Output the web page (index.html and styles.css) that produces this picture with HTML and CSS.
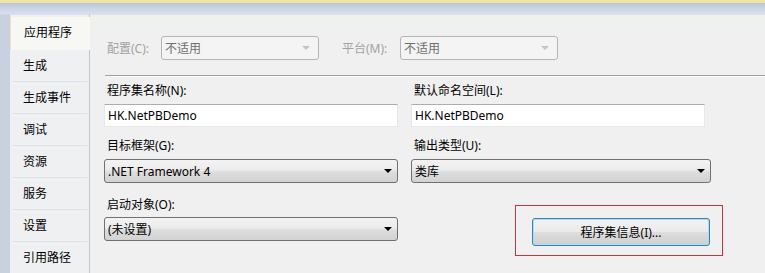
FILE: index.html
```html
<!DOCTYPE html>
<html lang="zh-CN">
<head>
<meta charset="utf-8">
<title>项目属性</title>
<link rel="stylesheet" href="styles.css">
</head>
<body>
<div class="topline"></div>
<div class="shell">
  <nav class="tabs">
    <div class="tab active">应用程序</div>
    <div class="tab">生成</div>
    <div class="tab">生成事件</div>
    <div class="tab">调试</div>
    <div class="tab">资源</div>
    <div class="tab">服务</div>
    <div class="tab">设置</div>
    <div class="tab">引用路径</div>
  </nav>
  <main class="main">
    <div class="cfg-row">
      <span class="cfg-label">配置(C):</span>
      <div class="combo disabled"><span class="val">不适用</span><span class="arrow"></span></div>
      <span class="cfg-label plat">平台(M):</span>
      <div class="combo disabled"><span class="val">不适用</span><span class="arrow"></span></div>
    </div>
    <div class="sep"></div>
    <div class="grid">
      <div class="field r1">
        <label class="lbl">程序集名称(N):</label>
        <div class="textbox">HK.NetPBDemo</div>
      </div>
      <div class="field r1">
        <label class="lbl">默认命名空间(L):</label>
        <div class="textbox">HK.NetPBDemo</div>
      </div>
      <div class="field r2">
        <label class="lbl">目标框架(G):</label>
        <div class="combo"><span class="val">.NET Framework 4</span><span class="arrow"></span></div>
      </div>
      <div class="field r2">
        <label class="lbl">输出类型(U):</label>
        <div class="combo wide"><span class="val">类库</span><span class="arrow"></span></div>
      </div>
      <div class="field r3">
        <label class="lbl">启动对象(O):</label>
        <div class="combo"><span class="val">(未设置)</span><span class="arrow"></span></div>
      </div>
      <div class="field r3">
        <div class="highlight">
          <button class="btn" type="button">程序集信息(I)...</button>
        </div>
      </div>
    </div>
    <div class="group-title">资源</div>
  </main>
</div>
</body>
</html>
```
FILE: styles.css
```css
html, body {
  margin: 0;
  padding: 0;
}
body {
  width: 765px;
  height: 273px;
  overflow: hidden;
  background: #c8d1df;
  font-family: "Noto Sans", "Noto Sans CJK SC", sans-serif;
  font-size: 12px;
  color: #000;
}
.topline {
  height: 3px;
  background: #f3e3a3;
}
.shell {
  display: flex;
  padding-top: 11px;
  padding-left: 10px;
  height: 259px;
  overflow: hidden;
  background: linear-gradient(#b9c5d9 0, #cdd6e4 6px, #d9def0 11px, #c8d1df 12px);
}
.tabs {
  width: 79px;
  flex: none;
  background: #eef0f2;
  border-right: 1px solid #c2c7cf;
  border-top: 1px solid #dde1ea;
  padding-top: 2px;
}
.tab {
  height: 31px;
  line-height: 31px;
  border-bottom: 1px solid #dfe2e6;
  margin: 0 2px 0 2px;
  padding-left: 11px;
  white-space: nowrap;
}
.tab.active {
  margin: 0 -1px 0 0;
  padding-left: 13px;
  background: #f7f7f4;
  border-left: 1px solid #efe2b8;
  border-bottom: none;
  height: 33px;
  line-height: 32px;
  position: relative;
  z-index: 1;
}
.main {
  flex: 1;
  background: linear-gradient(#eef2ea 0, #f0f0f0 14px);
  border-top: 1px solid #dde1ea;
  padding: 21px 0 0 14px;
  min-width: 0;
  overflow: hidden;
}
.cfg-row {
  display: flex;
  align-items: center;
  height: 24px;
}
.cfg-label {
  width: 54px;
  padding-left: 3px;
  color: #a2a2a2;
  white-space: nowrap;
}
.cfg-label.plat {
  width: 58px;
  margin-left: 20px;
}
.combo {
  box-sizing: border-box;
  width: 294px;
  height: 24px;
  display: flex;
  align-items: center;
  justify-content: space-between;
  padding: 0 5px 0 3px;
  border: 1px solid #707070;
  border-radius: 3px;
  background: linear-gradient(#f3f3f3 0%, #ebebeb 45%, #dddddd 55%, #d2d2d2 100%);
}
.combo.wide {
  width: 300px;
}
.combo.disabled {
  width: 158px;
  border-color: #b5b5b5;
  background: #f4f4f4;
  color: #6e6e6e;
}
.arrow {
  width: 0;
  height: 0;
  border-left: 4px solid transparent;
  border-right: 4px solid transparent;
  border-top: 4px solid #000;
}
.combo.disabled .arrow {
  border-top-color: #c4c4c4;
  margin-right: 3px;
}
.sep {
  height: 1px;
  background: #a0a0a0;
  border-bottom: 1px solid #fafafa;
  margin: 15px 0 0 1px;
}
.grid {
  display: grid;
  grid-template-columns: 294px 300px;
  column-gap: 13px;
}
.field {
  display: flex;
  flex-direction: column;
  align-items: flex-start;
}
.lbl {
  line-height: 16px;
  padding-left: 3px;
  white-space: nowrap;
}
.r1 { padding-top: 6px; }
.r1 .lbl { margin-bottom: 5px; }
.r2 { padding-top: 11px; }
.r2 .lbl { margin-bottom: 5px; }
.r3 { padding-top: 14px; }
.r3 .lbl { margin-bottom: 4px; }
.textbox {
  box-sizing: border-box;
  width: 294px;
  height: 23px;
  line-height: 21px;
  padding-left: 3px;
  background: #fff;
  border: 1px solid #e3e9ef;
  border-top-color: #abadb3;
}
.highlight {
  box-sizing: border-box;
  margin-left: 104px;
  margin-top: 8px;
  width: 208px;
  height: 51px;
  border: 1px solid #c8343c;
  padding: 12px 0 0 16px;
}
.btn {
  box-sizing: border-box;
  width: 178px;
  height: 28px;
  font: inherit;
  color: #000;
  border: 1px solid #3c7fb1;
  border-radius: 3px;
  box-shadow: inset 0 0 0 1px #a9dff2;
  background: linear-gradient(#f2f2f2 0%, #ebebeb 48%, #dddddd 52%, #cfcfcf 100%);
  padding: 0;
}
.group-title {
  margin: 17px 0 0 11px;
  line-height: 16px;
}
```
